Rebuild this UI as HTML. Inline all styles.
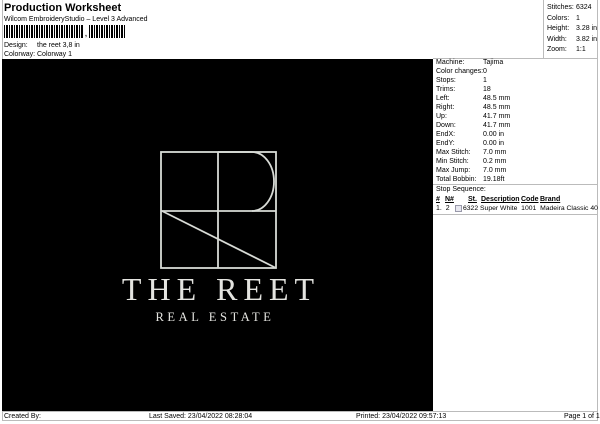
<!DOCTYPE html>
<html><head><style>
body{margin:0;width:600px;height:424px;background:#fff;font-family:"Liberation Sans",sans-serif;position:relative;overflow:hidden;color:#000}
.a{position:absolute;font-size:7px;white-space:nowrap;line-height:9px}
.b{position:absolute;background:#bbb}
u{text-decoration:underline}
</style></head><body>
<div class="b" style="left:2px;top:0;width:1px;height:421px"></div>
<div class="b" style="left:597px;top:0;width:1px;height:421px"></div>
<div class="b" style="left:2px;top:420px;width:596px;height:1px"></div>
<div class="b" style="left:2px;top:411px;width:596px;height:1px"></div>
<div class="b" style="left:543px;top:0;width:1px;height:58px"></div>
<div class="b" style="left:433px;top:58px;width:165px;height:1px"></div>
<div class="b" style="left:433px;top:184px;width:165px;height:1px"></div>
<div class="b" style="left:433px;top:214px;width:165px;height:1px"></div>
<div class="a" style="left:4px;top:2px;font-size:11px;font-weight:bold;line-height:13px">Production Worksheet</div>
<div class="a" style="left:4px;top:15px">Wilcom EmbroideryStudio – Level 3 Advanced</div>
<div style="position:absolute;left:4px;top:25px;width:80px;height:13px;background:repeating-linear-gradient(90deg,#000 0 1px,#fff 1px 2px,#000 2px 3px,#000 3px 4px,#fff 4px 5px)"></div>
<div class="a" style="left:85px;top:30px;font-weight:bold">,</div>
<div style="position:absolute;left:89px;top:25px;width:36px;height:13px;background:repeating-linear-gradient(90deg,#000 0 1px,#fff 1px 2px,#000 2px 4px,#fff 4px 5px)"></div>
<div class="a" style="left:4px;top:41px">Design:</div><div class="a" style="left:37px;top:41px">the reet 3,8 in</div>
<div class="a" style="left:4px;top:50px">Colorway:</div><div class="a" style="left:37px;top:50px">Colorway 1</div>
<div style="position:absolute;left:2px;top:59px;width:431px;height:352px;background:#000"></div>
<svg style="position:absolute;left:0;top:0" width="600" height="424">
<g fill="none" stroke="#d8dbd6" stroke-width="1.8">
<rect x="161" y="152" width="115" height="116"/>
<line x1="218" y1="152" x2="218" y2="268"/>
<line x1="161" y1="211" x2="276" y2="211"/>
<path d="M218 152H252A22 29.5 0 0 1 252 211"/>
<line x1="162" y1="211" x2="276" y2="268"/>
</g>
<text x="221" y="300" fill="#e4e4e0" font-family="Liberation Serif,serif" font-size="32" text-anchor="middle" letter-spacing="6">THE REET</text>
<text x="215" y="321" fill="#e4e4e0" font-family="Liberation Serif,serif" font-size="12.5" text-anchor="middle" letter-spacing="3.6">REAL ESTATE</text>
</svg>
<div class="a" style="left:547px;top:3px;line-height:10.5px">Stitches:<br>Colors:<br>Height:<br>Width:<br>Zoom:</div>
<div class="a" style="left:576px;top:3px;line-height:10.5px">6324<br>1<br>3.28 in<br>3.82 in<br>1:1</div>
<div class="a" style="left:436px;top:58px;line-height:9px">Machine:<br>Color changes:<br>Stops:<br>Trims:<br>Left:<br>Right:<br>Up:<br>Down:<br>EndX:<br>EndY:<br>Max Stitch:<br>Min Stitch:<br>Max Jump:<br>Total Bobbin:</div>
<div class="a" style="left:483px;top:58px;line-height:9px">Tajima<br>0<br>1<br>18<br>48.5 mm<br>48.5 mm<br>41.7 mm<br>41.7 mm<br>0.00 in<br>0.00 in<br>7.0 mm<br>0.2 mm<br>7.0 mm<br>19.18ft</div>
<div class="a" style="left:436px;top:185px">Stop Sequence:</div>
<div class="a" style="left:436px;top:195px;font-weight:bold"><u>#</u></div>
<div class="a" style="left:445px;top:195px;font-weight:bold"><u>N#</u></div>
<div class="a" style="left:468px;top:195px;font-weight:bold"><u>St.</u></div>
<div class="a" style="left:481px;top:195px;font-weight:bold"><u>Description</u></div>
<div class="a" style="left:521px;top:195px;font-weight:bold"><u>Code</u></div>
<div class="a" style="left:540px;top:195px;font-weight:bold"><u>Brand</u></div>
<div class="a" style="left:436px;top:204px">1.&nbsp; 2</div>
<div style="position:absolute;left:455px;top:205px;width:5px;height:5px;border:1px solid #99a;background:#e8e8f0"></div>
<div class="a" style="left:463px;top:204px;font-size:6.8px">6322 Super White&nbsp; 1001&nbsp; Madeira Classic 40</div>
<div class="a" style="left:4px;top:412px">Created By:</div>
<div class="a" style="left:149px;top:412px">Last Saved: 23/04/2022 08:28:04</div>
<div class="a" style="left:356px;top:412px">Printed: 23/04/2022 09:57:13</div>
<div class="a" style="left:564px;top:412px">Page 1 of 1</div>
</body></html>
